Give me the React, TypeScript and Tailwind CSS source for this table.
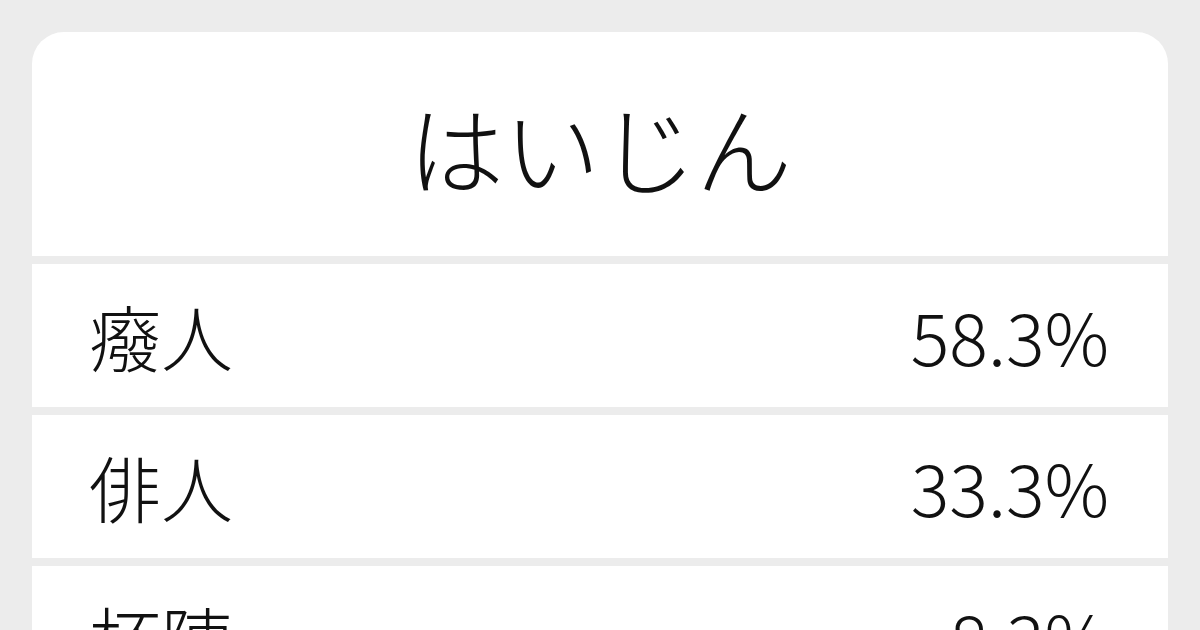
const rows = [
  { word: "癈人", pct: "58.3%" },
  { word: "俳人", pct: "33.3%" },
  { word: "杯陣", pct: "8.3%" },
];

export default function App() {
  return (
    <div
      className="w-[1200px] h-[630px] overflow-hidden bg-[#ececec] pt-[32px] px-[32px] text-[#111111]"
      style={{ fontFamily: '"Noto Sans CJK JP", "Noto Sans", sans-serif' }}
    >
      <div className="flex flex-col gap-[7.5px] rounded-t-[32px] overflow-hidden">
        <div className="h-[224px] bg-white flex items-center justify-center pt-[4px]">
          <span className="text-[96px] font-light leading-none">はいじん</span>
        </div>
        {rows.map((r) => (
          <div
            key={r.word}
            className="h-[143.5px] shrink-0 bg-white flex items-center justify-between pl-[57px] pr-[59px]"
          >
            <span className="text-[72px] font-light leading-none">{r.word}</span>
            <span className="text-[72px] font-light leading-none">{r.pct}</span>
          </div>
        ))}
      </div>
    </div>
  );
}
